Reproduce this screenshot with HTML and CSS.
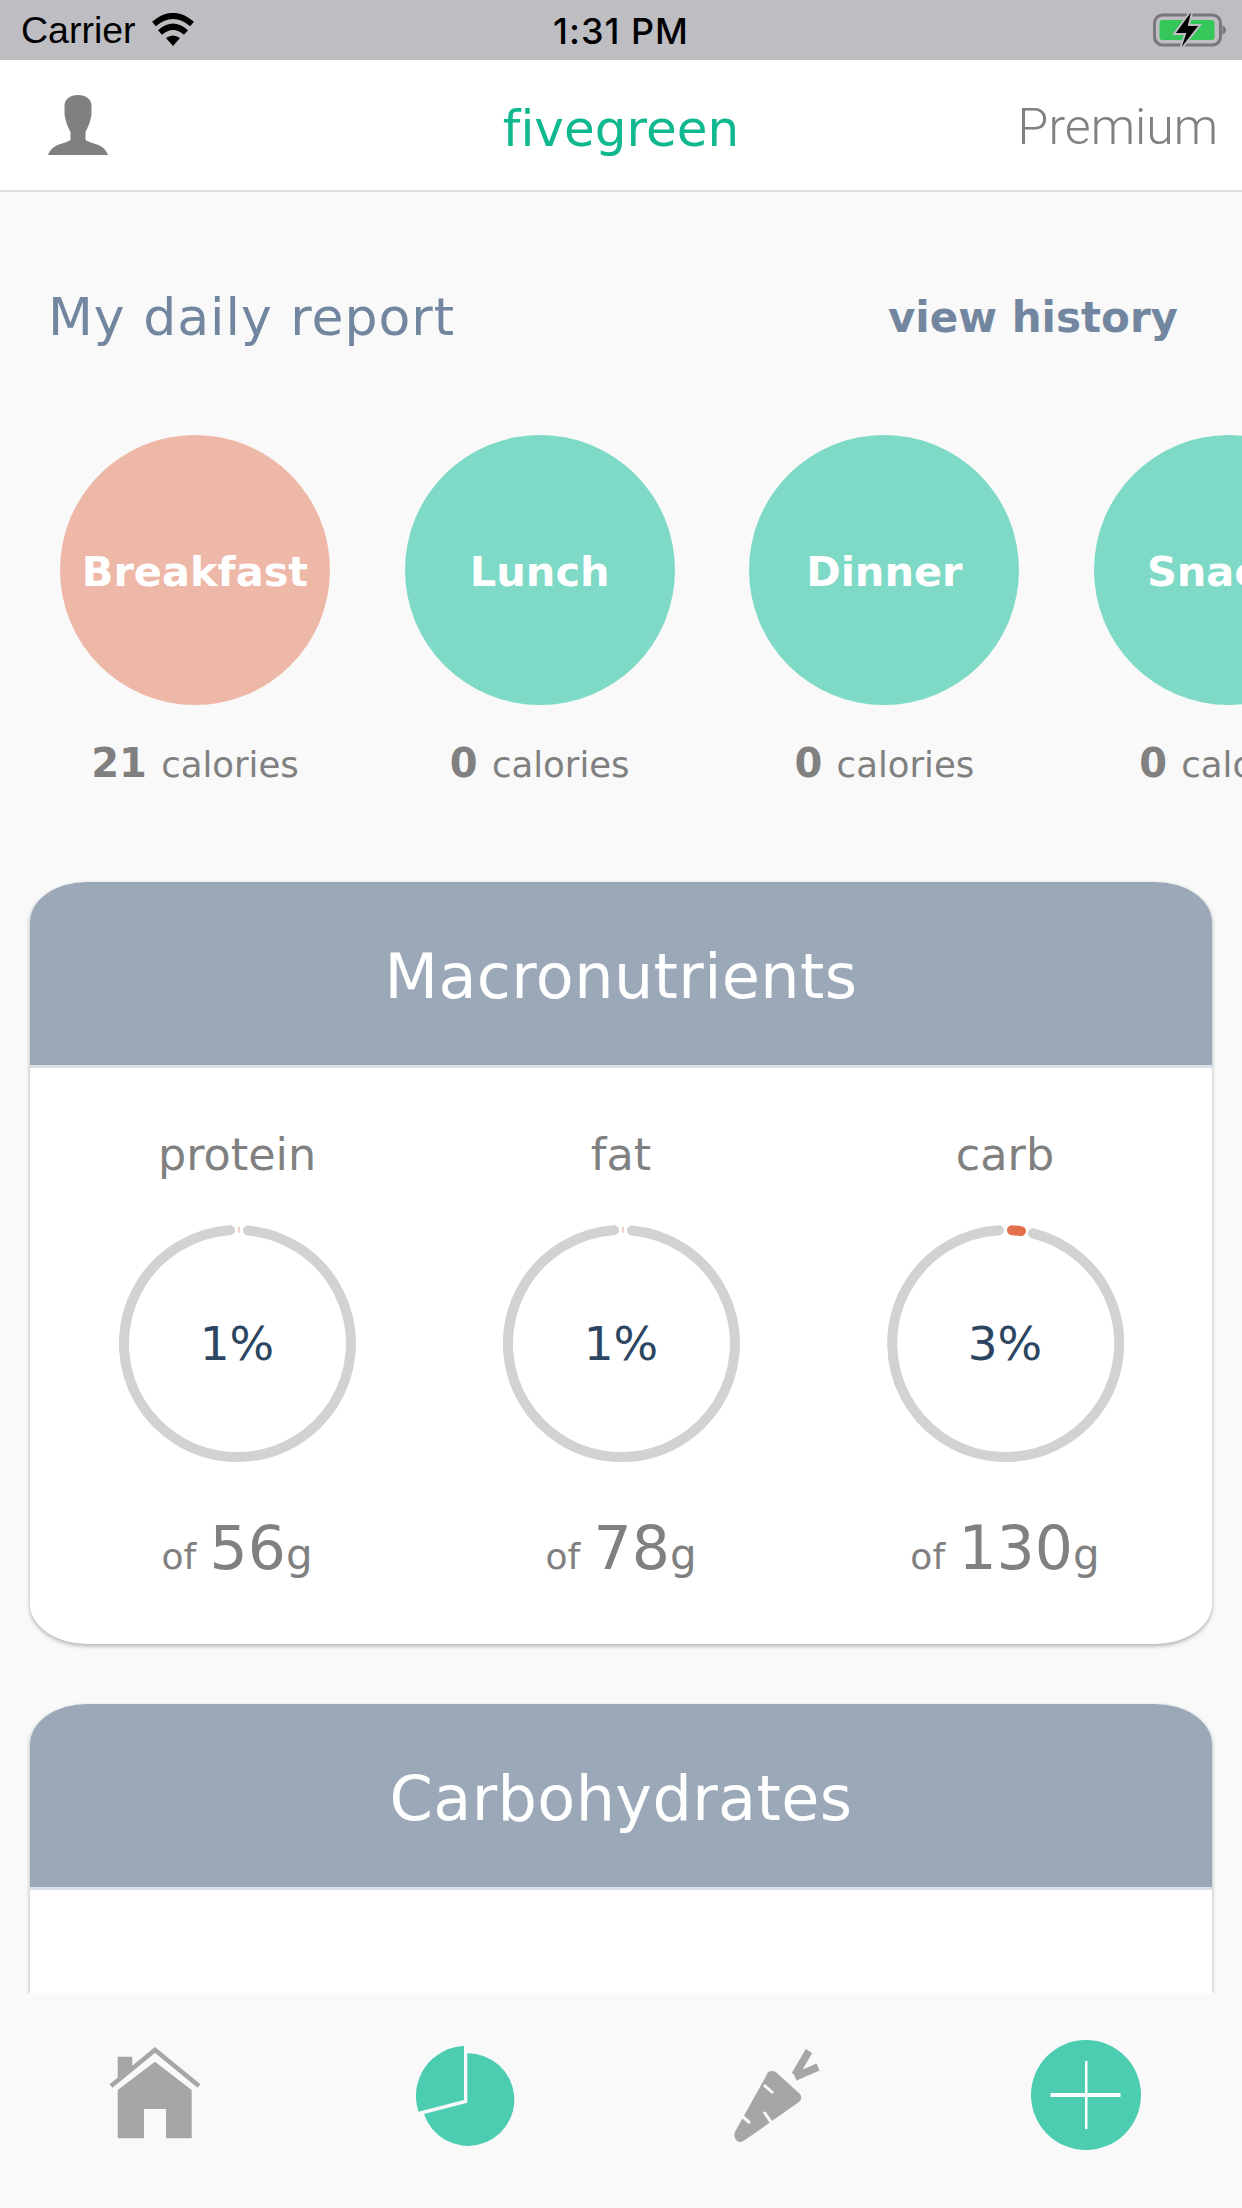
FILE: index.html
```html
<!DOCTYPE html>
<html lang="en">
<head>
  <meta charset="UTF-8" />
  <title>fivegreen</title>
  <link rel="stylesheet" href="styles.css">
</head>
<body>
  <div class="app">
    <div class="statusbar">
      <div class="status-left">
        <span class="carrier">Carrier</span>
        <svg class="wifi" viewBox="0 0 44 33" width="44" height="33">
          <path d="M3 11Q22 -5 41 11" fill="none" stroke="#000" stroke-width="6"/>
          <path d="M9 19.5Q22 8 35 19.5" fill="none" stroke="#000" stroke-width="6"/>
          <path d="M15 25Q22 20 29 25L22 33Z" fill="#000"/>
        </svg>
      </div>
      <span class="clock">1:31 PM</span>
      <div class="status-right">
        <svg viewBox="0 0 102 50" width="102" height="50">
          <rect x="14.5" y="10" width="66" height="30" rx="8" fill="none" stroke="#77777c" stroke-width="3"/>
          <rect x="19.5" y="15" width="55" height="20" rx="3" fill="#35c759"/>
          <path d="M82.500 20.500Q86 22 86 25Q86 28 82.500 29.500Z" fill="#77777c"/>
          <path d="M53 3L34 29H45L39 47L60 20H49Z" fill="#000" stroke="#bdbdc2" stroke-width="2"/>
        </svg>
      </div>
    </div>

    <header class="navbar">
      <div class="nav-left">
        <svg viewBox="0 0 60 60" width="60" height="60">
          <path d="M30 0C38 0 43.500 4 43.500 11L43.500 18C43 26 40 32 37.500 37L37.500 45C42 48 50 49 54 52C57 54 59 57 60 60L0 60C1 57 3 54 6 52C10 49 18 48 22.500 45L22.500 37C20 32 17 26 16.500 18L16.500 11C16.500 4 22 0 30 0Z" fill="#808080"/>
        </svg>
      </div>
      <div class="brand">fivegreen</div>
      <div class="premium">Premium</div>
    </header>

    <main class="content">
      <div class="report-head">
        <h2 class="report-title">My daily report</h2>
        <span class="report-link">view history</span>
      </div>

      <div class="meals">
        <div class="meal">
          <div class="meal-circle meal-active">Breakfast</div>
          <div class="meal-cal"><b>21</b> calories</div>
        </div>
        <div class="meal">
          <div class="meal-circle">Lunch</div>
          <div class="meal-cal"><b>0</b> calories</div>
        </div>
        <div class="meal">
          <div class="meal-circle">Dinner</div>
          <div class="meal-cal"><b>0</b> calories</div>
        </div>
        <div class="meal">
          <div class="meal-circle">Snacks</div>
          <div class="meal-cal"><b>0</b> calories</div>
        </div>
      </div>

      <section class="card">
        <h3 class="card-head">Macronutrients</h3>
        <div class="macro-grid">
          <div class="macro">
            <div class="macro-name">protein</div>
            <div class="ring">
              <svg viewBox="0 0 237 237" width="237" height="237">
                <path d="M129 5.500A113.500 113.500 0 1 1 111 5.250" fill="none" stroke="#d2d2d2" stroke-width="10" stroke-linecap="round"/>
                <path d="M120 2V8" stroke="#e9c4b6" stroke-width="1.500"/>
              </svg>
              <span class="ring-label">1%</span>
            </div>
            <div class="macro-total"><small>of</small> <big>56</big>g</div>
          </div>
          <div class="macro">
            <div class="macro-name">fat</div>
            <div class="ring">
              <svg viewBox="0 0 237 237" width="237" height="237">
                <path d="M129 5.500A113.500 113.500 0 1 1 111 5.250" fill="none" stroke="#d2d2d2" stroke-width="10" stroke-linecap="round"/>
                <path d="M120 2V8" stroke="#e9c4b6" stroke-width="1.500"/>
              </svg>
              <span class="ring-label">1%</span>
            </div>
            <div class="macro-total"><small>of</small> <big>78</big>g</div>
          </div>
          <div class="macro">
            <div class="macro-name">carb</div>
            <div class="ring">
              <svg viewBox="0 0 237 237" width="237" height="237">
                <path d="M145.900 8.300A113.500 113.500 0 1 1 112 5.200" fill="none" stroke="#d2d2d2" stroke-width="10" stroke-linecap="round"/>
                <path d="M125 5.200A113.500 113.500 0 0 1 134 6.100" fill="none" stroke="#e2704c" stroke-width="10" stroke-linecap="round"/>
              </svg>
              <span class="ring-label">3%</span>
            </div>
            <div class="macro-total"><small>of</small> <big>130</big>g</div>
          </div>
        </div>
      </section>

      <section class="card">
        <h3 class="card-head">Carbohydrates</h3>
        <div class="card-empty"></div>
      </section>
    </main>

    <nav class="tabbar">
      <div class="tab">
        <svg viewBox="0 0 130 130" width="130" height="130">
          <path d="M21 56L65 20L109 56" fill="none" stroke="#a6a6a6" stroke-width="4.500"/>
          <path d="M27.700 26.700H42.300V37L27.700 48Z" fill="#a6a6a6"/>
          <path d="M65 31.700L101.700 60V108.300H76V79H54V108.300H27.700V60Z" fill="#a6a6a6"/>
        </svg>
      </div>
      <div class="tab">
        <svg viewBox="2 0 130 130" width="130" height="130">
          <path d="M68.300 23.300A46.300 46.300 0 1 1 25 84L68.300 72.700Z" fill="#4ccdb2"/>
          <path d="M65 16V70L19.500 81.700A50 50 0 0 1 65 16Z" fill="#4ccdb2"/>
        </svg>
      </div>
      <div class="tab">
        <svg viewBox="0 0 110 120" width="110" height="120">
          <path d="M47 37Q53 34 58 40L79 59Q82 63 78 67L24 105Q17 110 14 103Q12 99 15 95L44 43Z" fill="#a6a6a6"/>
          <path d="M43 50L52 58M21 81L29 88M43 77L50 87" stroke="#f9f9f9" stroke-width="3" fill="none"/>
          <path d="M88 16L74 40M97 32L74 42" stroke="#a6a6a6" stroke-width="7.500" fill="none"/>
        </svg>
      </div>
      <div class="tab">
        <div class="add-btn">
          <svg viewBox="0 0 110 110" width="110" height="110">
            <path d="M54 21H56.500V89H54ZM19.500 53H89.500V57H19.500Z" fill="#fff"/>
          </svg>
        </div>
      </div>
    </nav>
  </div>
</body>
</html>
```

FILE: styles.css
```css
body {
  margin: 0;
  background-color: #f9f9f9;
  font-family: 'DejaVu Sans', sans-serif;
  font-variant-ligatures: none;
  color: #808080;
}

.app {
  width: 1242px;
  height: 2208px;
  display: flex;
  flex-direction: column;
  overflow: hidden;
}

/* status bar */
.statusbar {
  height: 60px;
  flex: none;
  display: grid;
  grid-template-columns: 1fr auto 1fr;
  align-items: center;
  background-color: #bdbdc2;
  color: #000;
  font-family: 'Liberation Sans', sans-serif;
}

.status-left {
  display: flex;
  align-items: center;
  gap: 15px;
  padding-left: 21px;
}

.carrier {
  font-size: 37.5px;
  padding-top: 1px;
}

.wifi {
  margin-top: -1px;
}

.clock {
  font-family: 'Inter', sans-serif;
  font-size: 36px;
  font-weight: 500;
  letter-spacing: 1px;
  padding-top: 2px;
}

.status-right {
  display: flex;
  justify-content: flex-end;
}

/* nav bar */
.navbar {
  height: 130px;
  flex: none;
  display: grid;
  grid-template-columns: 1fr auto 1fr;
  align-items: center;
  background-color: #fff;
  border-bottom: 2px solid #dedede;
}

.nav-left {
  display: flex;
  padding-left: 48px;
}

.brand {
  font-size: 50px;
  color: #0fb88f;
  padding-top: 8px;
}

.premium {
  text-align: right;
  padding-right: 24px;
  padding-top: 3px;
  font-family: 'Roboto', sans-serif;
  font-weight: 300;
  font-size: 50px;
  color: #808080;
}

/* scrolling area */
.content {
  flex: 1;
  min-height: 0;
  overflow: hidden;
}

.report-head {
  display: flex;
  justify-content: space-between;
  align-items: center;
  height: 70px;
  margin-top: 90px;
  padding: 0 64px 0 48px;
}

.report-title {
  margin: 0;
  font-size: 52px;
  font-weight: 400;
  letter-spacing: 1px;
  color: #72869f;
}

.report-link {
  font-size: 42px;
  font-weight: 700;
  color: #72869f;
}

.meals {
  display: flex;
  gap: 74.7px;
  margin-top: 83px;
  padding-left: 60px;
  white-space: nowrap;
}

.meal {
  flex: none;
  width: 270px;
  text-align: center;
}

.meal-circle {
  width: 270px;
  height: 270px;
  box-sizing: border-box;
  padding-top: 3px;
  border-radius: 50%;
  display: flex;
  align-items: center;
  justify-content: center;
  background-color: #7ed9c6;
  color: #fff;
  font-size: 41.5px;
  font-weight: 700;
}

.meal-active {
  background-color: #eeb8a8;
}

.meal-cal {
  margin-top: 32px;
  height: 52px;
  line-height: 52px;
  font-size: 35.5px;
}

.meal-cal b {
  font-size: 40px;
  margin-right: 3px;
}

/* cards */
.card {
  margin: 93px 30px 0;
  background-color: #fff;
  border-radius: 57px / 40px;
  box-shadow: 0 2px 4px rgba(0,0,0,0.3);
  overflow: hidden;
}

.card + .card {
  margin-top: 60px;
}

.card-head {
  margin: 0;
  height: 183px;
  line-height: 190px;
  text-align: center;
  background-color: #9aa8b8;
  border-bottom: 3px solid #d9e0e8;
  color: #fff;
  font-size: 62px;
  font-weight: 400;
  letter-spacing: 0.4px;
}

.macro-grid {
  display: grid;
  grid-template-columns: repeat(3, 384px);
  padding: 60px 15px 0;
  height: 516px;
}

.macro {
  text-align: center;
}

.macro-name {
  height: 54px;
  line-height: 54px;
  font-size: 44.5px;
}

.ring {
  position: relative;
  width: 237px;
  height: 237px;
  margin: 43px auto 0;
}

.ring svg {
  display: block;
}

.ring-label {
  position: absolute;
  inset: 0;
  display: flex;
  align-items: center;
  justify-content: center;
  color: #2c4560;
  font-size: 47px;
}

.macro-total {
  margin-top: 51px;
  height: 70px;
  line-height: 70px;
  font-size: 42px;
}

.macro-total small {
  font-size: 36px;
}

.macro-total big {
  font-size: 60px;
}

.card-empty {
  height: 200px;
}

/* tab bar */
.tabbar {
  height: 215px;
  flex: none;
  box-sizing: border-box;
  padding-bottom: 11px;
  display: grid;
  grid-template-columns: repeat(4, 1fr);
  align-items: center;
  background-color: #f9f9f9;
}

.tab {
  display: flex;
  justify-content: center;
}

.add-btn {
  width: 110px;
  height: 110px;
  margin-right: 2px;
  border-radius: 50%;
  background-color: #4ccdb2;
}

.add-btn svg {
  display: block;
}
```
